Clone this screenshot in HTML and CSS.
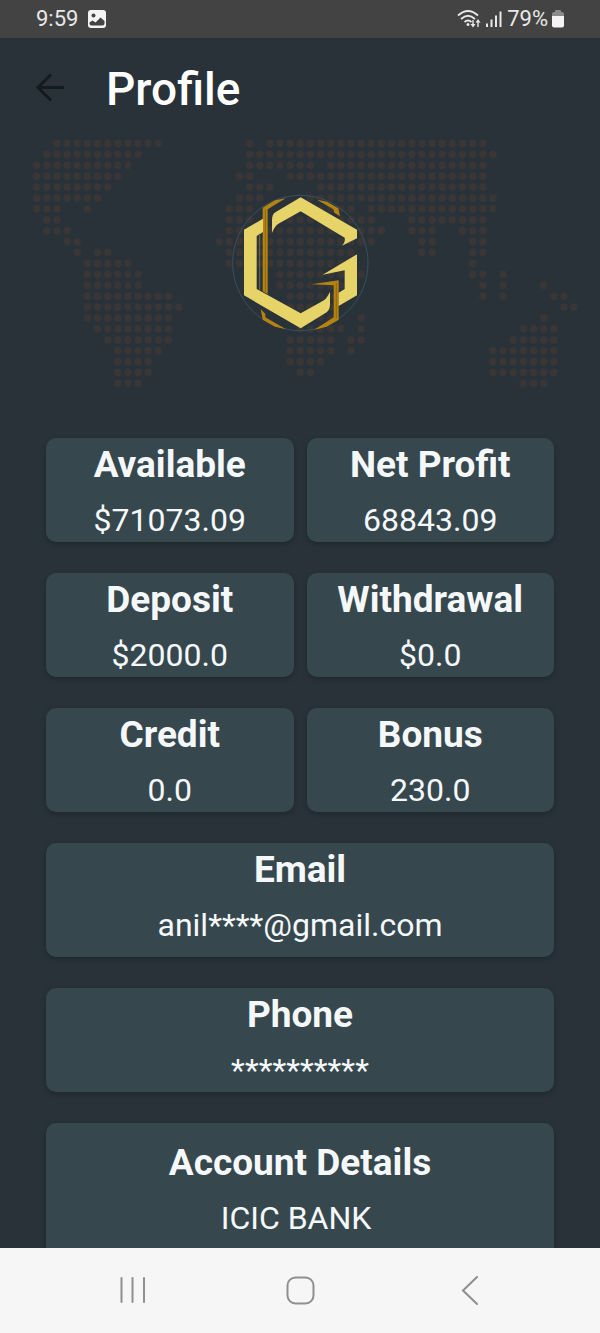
FILE: index.html
```html
<!DOCTYPE html>
<html lang="en">
<head>
<meta charset="utf-8">
<meta name="viewport" content="width=device-width, initial-scale=1">
<title>Profile</title>
<link rel="stylesheet" href="styles.css">
</head>
<body>
<div class="screen">
  <div class="status">
    <div class="status-side">
      <span>9:59</span>
      <svg class="icon-image" viewBox="0 0 18 18" aria-hidden="true">
        <rect width="18" height="18" rx="3" fill="#f4f4f4"/>
        <circle cx="5.500" cy="5.500" r="2" fill="#434343"/>
        <path d="M1.500 13.500V12.500L4.500 10.500L7.500 12.500L12.500 7.500L16.500 11V13.500Q16.500 15.500 14.500 15.500H3.500Q1.500 15.500 1.500 13.500Z" fill="#434343"/>
      </svg>
    </div>
    <div class="status-side status-right">
      <svg class="icon-signal" viewBox="0 0 46 20" fill="none" stroke="#e8e8e8" aria-hidden="true">
        <path d="M1 6.500Q11 -2.500 21 6.500M4 10Q11 3.500 18 10M7.500 13Q11 10 14.500 13" stroke-width="1.800"/>
        <circle cx="11" cy="15.500" r="1.500" fill="#e8e8e8" stroke="none"/>
        <path d="M16 11V17M21 18V12" stroke-width="1.400"/>
        <path d="M13.500 15H18.500L16 18.500ZM18.500 13.500H23.500L21 10Z" fill="#e8e8e8" stroke="none"/>
        <path d="M30 18V14.500M34.500 18V10.500M39 18V6.500M43.500 18V2.500" stroke-width="2"/>
      </svg>
      <span>79%</span>
      <svg class="icon-battery" viewBox="0 0 12 18" aria-hidden="true">
        <path d="M3 2V1Q3 0 4 0H8Q9 0 9 1V2H10Q12 2 12 4V6H0V4Q0 2 2 2Z" fill="#8a8a8a"/>
        <path d="M0 6H12V15.500Q12 17.500 10 17.500H2Q0 17.500 0 15.500Z" fill="#f4f4f4"/>
      </svg>
    </div>
  </div>

  <header class="topbar">
    <button class="back" type="button" aria-label="Back">
      <svg viewBox="0 0 30 30" fill="none" stroke="#141b1f" stroke-width="3" aria-hidden="true">
        <path d="M29 14.500H3M16 1.500L3 14.500L16 27.500"/>
      </svg>
    </button>
    <h1>Profile</h1>
  </header>

  <main class="content">
    <svg class="hero" viewBox="0 0 600 300" role="img" aria-label="World map with company logo">
      <defs>
        <pattern id="dots" width="1" height="1" patternUnits="userSpaceOnUse">
          <ellipse cx=".5" cy=".5" rx=".35" ry=".33" fill="#3a3636"/>
        </pattern>
      </defs>
      <g transform="translate(31.600 0) scale(10.140 10.910)" stroke="url(#dots)" fill="none">
        <path d="M2 .5h11M21 .5h1M23 .5h22
          M1 1.500h10M21 1.500h25
          M0 2.500h10M21 2.500h7M29 2.500h16
          M0 3.500h9M20 3.500h2M25 3.500h20
          M0 4.500h8M21 4.500h3M28 4.500h17
          M0 5.500h7M20 5.500h3M27 5.500h19
          M0 6.500h3M5 6.500h1M19 6.500h3M25 6.500h7M33 6.500h13
          M1 7.500h2M19 7.500h3M25 7.500h9M37 7.500h8
          M1 8.500h3M19 8.500h16M37 8.500h3M42 8.500h3
          M3 9.500h2M18 9.500h16M38 9.500h2M43 9.500h2
          M4 10.500h1M6 10.500h2M19 10.500h13M38 10.500h2M43 10.500h2
          M5 11.500h5M19 11.500h13M43 11.500h1
          M5 12.500h6M24 12.500h9M43 12.500h2M46 12.500h1
          M5 13.500h6M24 13.500h8M44 13.500h1M46 13.500h1M50 13.500h1
          M5 14.500h9M25 14.500h6M44 14.500h1M46 14.500h1M51 14.500h2
          M5 15.500h10M25 15.500h5M52 15.500h2
          M5 16.500h9M25 16.500h5M32 16.500h1M50 16.500h1
          M6 17.500h8M26 17.500h5M32 17.500h1M48 17.500h4
          M7 18.500h7M25 18.500h5M31 18.500h2M47 18.500h5
          M8 19.500h5M25 19.500h5M31 19.500h1M45 19.500h7
          M8 20.500h4M25 20.500h4M45 20.500h7
          M8 21.500h4M26 21.500h2M45 21.500h7
          M8 22.500h3M48 22.500h3"/>
      </g>
      <g transform="translate(225 47) scale(.33333)">
        <circle cx="226" cy="234" r="203" fill="none" stroke="#36505d" stroke-width="3"/>
        <g fill="#b5830f">
          <path d="M113 68L150 46L182 40L128 73V328L113 319Z"/>
          <path d="M276 44L306 50L340 70L345 94L328 83L325 73Z"/>
          <path d="M107 372L121 387V397L182 432L150 425L113 404Z"/>
          <path d="M260 298L341 286V404L305 425L268 434L326 397V301Z"/>
        </g>
        <path d="M121 74V322M334 294V400" stroke="#8f6712" stroke-width="3"/>
        <g fill="#e6d468">
          <path d="M57 134L114 101V141L95 153V312L227 385L293 348Q305 342 315 320V358Q315 374 305 382L227 430L57 331Z"/>
          <path d="M227 37L396 134V160L351 182Q362 170 359 158L227 79L163 115Q151 121 141 143V105Q141 89 151 82Z"/>
          <path d="M396 208V331L341 363V323L359 312V256L293 269Z"/>
        </g>
        <path d="M104 150V316" stroke="#6f7050" stroke-width="3"/>
      </g>
    </svg>

    <dl class="cards">
      <div class="card"><dt>Available</dt><dd>$71073.09</dd></div>
      <div class="card"><dt>Net Profit</dt><dd>68843.09</dd></div>
      <div class="card"><dt>Deposit</dt><dd>$2000.0</dd></div>
      <div class="card"><dt>Withdrawal</dt><dd>$0.0</dd></div>
      <div class="card"><dt>Credit</dt><dd>0.0</dd></div>
      <div class="card"><dt>Bonus</dt><dd>230.0</dd></div>
      <div class="card wide roomy"><dt>Email</dt><dd>anil****@gmail.com</dd></div>
      <div class="card wide"><dt>Phone</dt><dd>**********</dd></div>
      <div class="card wide account"><dt>Account Details</dt><dd>ICIC BANK&nbsp;</dd></div>
    </dl>
  </main>

  <nav class="navbar" aria-label="System navigation">
    <button type="button" aria-label="Recent apps">
      <svg viewBox="0 0 30 30" aria-hidden="true"><path d="M3.500 2V26M14.500 2V26M26 2V26"/></svg>
    </button>
    <button type="button" aria-label="Home">
      <svg viewBox="0 0 30 30" aria-hidden="true"><rect x="2.500" y="1.500" width="26" height="26" rx="8"/></svg>
    </button>
    <button type="button" aria-label="Back">
      <svg viewBox="0 0 30 30" aria-hidden="true"><path d="M25 1L11 14.500L25 28"/></svg>
    </button>
  </nav>
</div>
</body>
</html>
```
FILE: styles.css
```css
* {
  box-sizing: border-box;
}

body {
  margin: 0;
  font-family: Roboto, sans-serif;
  color: #f5f8fa;
  background: #293239;
}

button {
  display: flex;
  padding: 0;
  border: 0;
  background: none;
}

svg {
  display: block;
}

.screen {
  display: flex;
  flex-direction: column;
  height: 100vh;
  overflow: hidden;
}

.status {
  display: flex;
  justify-content: space-between;
  align-items: center;
  flex: none;
  padding: 0 36px;
  background: #434343;
  color: #e8e8e8;
  font-size: 22px;
  line-height: 38px;
}

.status-side {
  display: flex;
  align-items: center;
  gap: 10px;
}

.status-right {
  gap: 4px;
}

.icon-image {
  width: 18px;
  height: 18px;
}

.icon-signal {
  width: 46px;
  height: 20px;
}

.icon-battery {
  width: 12px;
  height: 18px;
}

.topbar {
  display: flex;
  align-items: center;
  flex: none;
  gap: 41px;
  height: 100px;
  padding: 0 35px;
}

.back svg {
  width: 30px;
  height: 30px;
}

.topbar h1 {
  margin: 0;
  padding-top: 2px;
  font-size: 46px;
  font-weight: 500;
  line-height: 60px;
  color: #fff;
}

.content {
  flex: 1;
  min-height: 0;
  overflow: hidden;
}

.hero {
  width: 100%;
}

.cards {
  display: grid;
  grid-template-columns: 1fr 1fr;
  gap: 31px 13px;
  margin: 0;
  padding: 0 46px;
}

.card {
  padding: 4px 8px 2px;
  border-radius: 10px;
  background: #37474e;
  box-shadow: 0 2px 4px rgba(20, 30, 34, 0.5);
  text-align: center;
}

.card dt {
  font-size: 37px;
  font-weight: 700;
  line-height: 46px;
}

.card dd {
  margin: 12px 0 0;
  font-size: 32px;
  line-height: 40px;
}

.wide {
  grid-column: 1 / -1;
}

.roomy {
  padding-bottom: 12px;
}

.account {
  padding-top: 17px;
  padding-bottom: 40px;
}

.navbar {
  display: flex;
  justify-content: space-around;
  align-items: center;
  flex: none;
  height: 85px;
  padding: 0 49px;
  background: #f6f6f6;
}

.navbar svg {
  width: 30px;
  height: 30px;
  fill: none;
  stroke: #8e8e8e;
  stroke-width: 2px;
  stroke-linecap: round;
}
```
